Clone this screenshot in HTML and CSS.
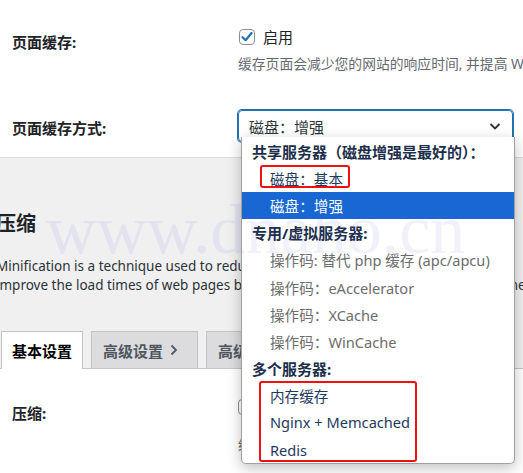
FILE: index.html
```html
<!DOCTYPE html>
<html lang="zh-CN">
<head>
    <meta charset="UTF-8">
    <meta name="viewport" content="width=device-width, initial-scale=1.0">
    <title>页面缓存</title>
    <link rel="stylesheet" href="styles.css">
</head>
<body>
    <div class="top-panel">
        <div class="form-row row-cache">
            <div class="row-label">页面缓存:</div>
            <div class="row-field">
                <label class="check-line">
                    <span class="checkbox checked">
                        <svg width="14" height="14" viewBox="0 0 14 14"><path d="M2.5 7.2 L5.6 10.2 L11.6 3" fill="none" stroke="#2271b1" stroke-width="2.2" stroke-linecap="round" stroke-linejoin="round"/></svg>
                    </span>
                    <span>启用</span>
                </label>
                <p class="desc">缓存页面会减少您的网站的响应时间, 并提高 Web 服务器的响应能力</p>
            </div>
        </div>
        <div class="form-row row-method">
            <div class="row-label">页面缓存方式:</div>
            <div class="row-field">
                <div class="select-box">
                    <span>磁盘：增强</span>
                    <svg width="14" height="14" viewBox="0 0 14 14"><path d="M2.5 5 L7 9.5 L11.5 5" fill="none" stroke="#2c3338" stroke-width="1.8"/></svg>
                </div>
            </div>
        </div>
    </div>

    <div class="gray-section">
        <h2>压缩</h2>
        <p class="intro">
            <span>Minification is a technique used to reduce the size of your HTML, CSS and JS file</span>
            <span>improve the load times of web pages by removing whitespace, comments and unnecessary</span>
        </p>
    </div>

    <div class="tabs">
        <div class="tab active">基本设置</div>
        <div class="tab">高级设置
            <svg class="tab-arrow" width="8" height="12" viewBox="0 0 8 12"><path d="M1.5 1.5 L6 6 L1.5 10.5" fill="none" stroke="#50575e" stroke-width="1.8"/></svg>
        </div>
        <div class="tab">高级设置
            <svg class="tab-arrow" width="8" height="12" viewBox="0 0 8 12"><path d="M1.5 1.5 L6 6 L1.5 10.5" fill="none" stroke="#50575e" stroke-width="1.8"/></svg>
        </div>
    </div>

    <div class="bottom-panel">
        <div class="form-row row-minify">
            <div class="row-label">压缩:</div>
            <div class="row-field">
                <span class="checkbox"></span>
                <p class="desc">缓存压缩文件以减小大小</p>
            </div>
        </div>
    </div>

    <ul class="dropdown">
        <li class="group">共享服务器（磁盘增强是最好的）：</li>
        <li class="opt">磁盘：基本</li>
        <li class="opt selected">磁盘：增强</li>
        <li class="group">专用/虚拟服务器:</li>
        <li class="opt disabled">操作码: 替代 php 缓存 (apc/apcu)</li>
        <li class="opt disabled">操作码：eAccelerator</li>
        <li class="opt disabled">操作码：XCache</li>
        <li class="opt disabled">操作码：WinCache</li>
        <li class="group">多个服务器:</li>
        <li class="opt">内存缓存</li>
        <li class="opt">Nginx + Memcached</li>
        <li class="opt">Redis</li>
    </ul>

    <div class="mark mark-basic"></div>
    <div class="mark mark-multi"></div>

    <div class="watermark">www.dnaho.cn</div>
</body>
</html>
```

FILE: styles.css
```css
body {
    margin: 0;
    background-color: #f0f0f1;
    color: #1d2327;
    font-family: "Noto Sans", "Noto Sans CJK SC", sans-serif;
    overflow: hidden;
    height: 473px;
}

.top-panel {
    background-color: #fff;
    height: 157px;
    border-bottom: 1px solid #dcdcde;
}

.form-row {
    display: grid;
    grid-template-columns: 238px 1fr;
}

.row-label {
    padding-left: 12px;
    font-size: 15px;
    font-weight: 700;
}

.row-cache {
    padding-top: 26px;
}

.row-cache .row-label {
    padding-top: 5px;
}

.check-line {
    display: flex;
    align-items: center;
    gap: 8px;
    font-size: 15px;
    margin-left: 1px;
}

.checkbox {
    display: inline-flex;
    align-items: center;
    justify-content: center;
    width: 14px;
    height: 14px;
    border: 1px solid #8c8f94;
    border-radius: 4px;
    background: #fff;
}

.desc {
    margin: 6px 0 0;
    font-size: 13.8px;
    color: #646970;
    white-space: nowrap;
}

.row-method {
    padding-top: 37px;
}

.row-method .row-label {
    padding-top: 7px;
}

.select-box {
    width: 275px;
    height: 32px;
    box-sizing: border-box;
    border: 1px solid #2271b1;
    box-shadow: 0 0 0 1px #2271b1;
    border-radius: 4px;
    display: flex;
    align-items: center;
    justify-content: space-between;
    padding: 0 10px 0 10px;
    font-size: 15px;
    color: #2c3338;
}

.gray-section {
    padding: 52px 0 0;
    margin-left: -4px;
}

.gray-section h2 {
    margin: 0;
    font-size: 20px;
    font-weight: 700;
    line-height: 28px;
}

.intro {
    margin: 19px 0 0;
    font-size: 13.5px;
    line-height: 19px;
    color: #2c3338;
}

.intro span {
    display: block;
    white-space: nowrap;
}

.tabs {
    display: flex;
    gap: 8px;
    margin-top: 36px;
    padding-left: 1px;
    border-bottom: 1px solid #c3c4c7;
    height: 37px;
}

.tab {
    border: 1px solid #c3c4c7;
    border-bottom: none;
    background-color: #dcdcde;
    color: #50575e;
    font-size: 15px;
    font-weight: 700;
    padding: 0 19px 0 11px;
    display: flex;
    align-items: center;
    white-space: nowrap;
}

.tab-arrow {
    margin-left: 7px;
}

.tab.active {
    background-color: #fff;
    color: #000;
    margin-bottom: -1px;
    padding: 0 10px;
}

.bottom-panel {
    background-color: #fff;
    height: 120px;
}

.row-minify {
    padding-top: 29px;
}

.row-minify .row-label {
    padding-top: 4px;
}

.row-minify .desc {
    margin-top: 14px;
}

.watermark {
    position: absolute;
    left: 46px;
    top: 190px;
    font-family: "Liberation Serif", serif;
    font-size: 70px;
    color: rgba(80, 80, 220, 0.08);
    white-space: nowrap;
    pointer-events: none;
}

.dropdown {
    position: absolute;
    left: 241px;
    top: 137px;
    width: 272px;
    margin: 0;
    padding: 1px 0 0;
    list-style: none;
    background-color: #fff;
    border: 1px solid #a0a0a0;
    border-top: none;
    border-radius: 0 0 5px 5px;
    box-shadow: 0 4px 14px rgba(0, 0, 0, 0.25);
    font-size: 15px;
}

.dropdown li {
    height: 27.1px;
    display: flex;
    align-items: center;
    white-space: nowrap;
}

.dropdown .group {
    padding-left: 10px;
    font-weight: 700;
    font-size: 15px;
    color: #1c2e4a;
}

.dropdown .opt {
    padding-left: 28px;
    font-size: 14.6px;
    color: #1f3a60;
}

.dropdown .disabled {
    color: #6d6d6d;
}

.dropdown .selected {
    background-color: #1967d2;
    color: #fff;
}

.mark {
    position: absolute;
    border: 2px solid #f01010;
    border-radius: 3px;
}

.mark-basic {
    left: 260px;
    top: 165px;
    width: 86px;
    height: 19px;
}

.mark-multi {
    left: 259px;
    top: 381px;
    width: 154px;
    height: 77px;
}
```
